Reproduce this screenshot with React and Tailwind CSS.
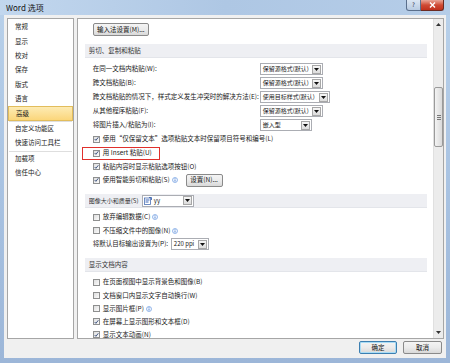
import React from "react";

const F = "font-['Noto_Sans_CJK_SC','Noto_Sans',sans-serif]";

function Check({ checked }) {
  return (
    <span className="w-[7px] h-[7px] border border-[#8e8f8f] bg-gradient-to-br from-[#dedede] to-[#fbfbfb] flex items-center justify-center shrink-0">
      {checked && (
        <svg width="6" height="6" viewBox="0 0 6 6">
          <path d="M0.8 3 L2.3 4.6 L5.2 0.9" stroke="#334a7a" strokeWidth="1.1" fill="none" />
        </svg>
      )}
    </span>
  );
}

function Info() {
  return (
    <svg width="6" height="6" viewBox="0 0 6 6" className="ml-[2px] shrink-0">
      <circle cx="3" cy="3" r="2.5" stroke="#6d9be0" strokeWidth="0.7" fill="#f4f8ff" />
      <rect x="2.6" y="2.5" width="0.8" height="2" fill="#3d74c9" />
      <rect x="2.6" y="1.3" width="0.8" height="0.7" fill="#3d74c9" />
    </svg>
  );
}

function Arrow() {
  return (
    <span className="w-[9px] h-[9px] mr-[1px] border border-[#a7a7a7] bg-gradient-to-b from-[#f6f6f6] to-[#dcdcdc] flex items-center justify-center shrink-0">
      <svg width="5" height="3" viewBox="0 0 5 3">
        <path d="M0 0 H5 L2.5 3 Z" fill="#111" />
      </svg>
    </span>
  );
}

function Drop({ text, cls, icon }) {
  return (
    <div className={"flex items-center h-[12px] border border-[#abadb3] bg-white shrink-0 " + cls}>
      {icon && (
        <svg width="8" height="8" viewBox="0 0 8 8" className="ml-[1px] shrink-0">
          <rect x="0.5" y="1" width="6" height="6.5" fill="#fff" stroke="#4a6fb3" strokeWidth="0.8" />
          <rect x="1.5" y="2.5" width="4" height="1" fill="#3a66b8" />
          <rect x="1.5" y="4.5" width="3" height="1" fill="#3a66b8" />
          <path d="M5 0.5 L7.5 0.5 L7.5 3" stroke="#2b54a6" strokeWidth="0.8" fill="none" />
        </svg>
      )}
      <span className="flex-1 pl-[2px] text-[6px] leading-[10px] text-[#1a1a1a] whitespace-nowrap overflow-hidden">{text}</span>
      <Arrow />
    </div>
  );
}

function Band({ children }) {
  return (
    <div className="ml-[7px] mr-[6px] h-[14px] bg-[#eeeff3] border-b border-[#e3e5ea] flex items-center pl-[4px] text-[6.5px] text-[#333] whitespace-nowrap shrink-0">
      {children}
    </div>
  );
}

function SelRow({ label, children, h }) {
  return (
    <div className={"flex items-center pl-[15px] shrink-0 " + h}>
      <span className="w-[167px] whitespace-nowrap text-[6.5px] text-[#1a1a1a]">{label}</span>
      {children}
    </div>
  );
}

function CheckRow({ checked, label, info, h, children }) {
  return (
    <div className={"flex items-center pl-[15px] shrink-0 " + h}>
      <Check checked={checked} />
      <span className="ml-[3px] whitespace-nowrap text-[6.5px] text-[#1a1a1a]">{label}</span>
      {info && <Info />}
      {children}
    </div>
  );
}

function Btn({ children, def, cls }) {
  return (
    <div
      className={
        "h-[13px] flex items-center justify-center rounded-[2px] border text-[6.5px] text-[#111] bg-gradient-to-b from-[#f4f4f4] via-[#ebebeb] to-[#d9d9d9] " +
        (def ? "border-[#3c7fb1] shadow-[inset_0_0_0_1px_#a9dcf5] " : "border-[#8a8a8a] ") +
        cls
      }
    >
      {children}
    </div>
  );
}

const nav1 = ["常规", "显示", "校对", "保存", "版式", "语言"];

export default function App() {
  return (
    <div className={"w-[450px] h-[363px] overflow-hidden flex flex-col bg-gradient-to-b from-[#b9d1ea] via-[#a9c3e2] to-[#9cb6d8] " + F}>
      {/* title bar */}
      <div className="h-[15px] flex items-start shrink-0 bg-gradient-to-r from-[#c2d7ee] via-[#aec7e4] to-[#b5cde8]">
        <span className="ml-[6px] mt-[3px] text-[8px] leading-[9px] text-[#111]">Word 选项</span>
        <div className="flex-1" />
        <div className="flex mr-[6px]">
          <div className="w-[15px] h-[11px] rounded-bl-[3px] border border-t-0 border-[#5a6f8c] bg-gradient-to-b from-[#dbe6f3] to-[#b8cbe2] flex items-center justify-center text-[6px] leading-none text-[#223]">?</div>
          <div className="w-[23px] h-[11px] rounded-br-[3px] border border-t-0 border-l-0 border-[#6b2a22] bg-gradient-to-b from-[#e8a597] via-[#cf4a34] to-[#c0301c] flex items-center justify-center">
            <svg width="7" height="6" viewBox="0 0 7 6">
              <path d="M1 0.5 L6 5.5 M6 0.5 L1 5.5" stroke="#fff" strokeWidth="1.4" />
            </svg>
          </div>
        </div>
      </div>

      {/* client */}
      <div className="mx-[4px] h-[343px] bg-[#f0f0f0] flex flex-col shrink-0">
        <div className="flex pl-[3px] pr-[2px] pt-[3px] gap-[3px] h-[324px]">
          {/* nav */}
          <div className="w-[67px] h-[321px] bg-white border border-[#a6a6a6] pt-[1px] flex flex-col">
            {nav1.map((t) => (
              <div key={t} className="h-[14.4px] flex items-center pl-[7px] text-[6.5px] text-[#1a1a1a]">{t}</div>
            ))}
            <div className="h-[14.4px] flex items-center pl-[7px] text-[6.5px] text-[#1a1a1a] border border-[#e2bd5c] bg-gradient-to-b from-[#fdebb3] to-[#fbd67a]">高级</div>
            <div className="mx-[1px] border-t border-[#dedede]" />
            <div className="h-[14.4px] flex items-center pl-[7px] text-[6.5px] text-[#1a1a1a]">自定义功能区</div>
            <div className="h-[14.4px] flex items-center pl-[7px] text-[6.5px] text-[#1a1a1a]">快速访问工具栏</div>
            <div className="mx-[1px] border-t border-[#dedede]" />
            <div className="h-[14.4px] flex items-center pl-[7px] text-[6.5px] text-[#1a1a1a]">加载项</div>
            <div className="h-[14.4px] flex items-center pl-[7px] text-[6.5px] text-[#1a1a1a]">信任中心</div>
          </div>

          {/* content */}
          <div className="w-[368px] h-[321px] bg-white border border-[#a6a6a6] flex overflow-hidden">
            <div className="flex-1 flex flex-col overflow-hidden">
              <div className="pl-[15px] pt-[4px] shrink-0">
                <Btn cls="w-[56px]">输入法设置(M)...</Btn>
              </div>
              <div className="h-[8px] shrink-0" />
              <Band>剪切、复制和粘贴</Band>
              <div className="h-[4px] shrink-0" />
              <SelRow h="h-[14px]" label="在同一文档内粘贴(W):">
                <Drop text="保留源格式(默认)" cls="w-[63px]" />
              </SelRow>
              <SelRow h="h-[14px]" label="跨文档粘贴(B):">
                <Drop text="保留源格式(默认)" cls="w-[63px]" />
              </SelRow>
              <SelRow h="h-[14px]" label="跨文档粘贴的情况下，样式定义发生冲突时的解决方法(E):">
                <Drop text="使用目标样式(默认)" cls="w-[70px]" />
              </SelRow>
              <SelRow h="h-[14px]" label="从其他程序粘贴(F):">
                <Drop text="保留源格式(默认)" cls="w-[63px]" />
              </SelRow>
              <SelRow h="h-[14px]" label="将图片插入/粘贴为(I):">
                <Drop text="嵌入型" cls="w-[52px]" />
              </SelRow>
              <CheckRow h="h-[14px]" checked label="使用“仅保留文本”选项粘贴文本时保留项目符号和编号(L)" />
              <div className="h-[14px] flex items-center pl-[4px] shrink-0">
                <div className="w-[78px] h-[13px] border border-[#e0302c] flex items-center pl-[10px]">
                  <Check checked />
                  <span className="ml-[3px] whitespace-nowrap text-[6.5px] text-[#1a1a1a]">用 Insert 粘贴(U)</span>
                </div>
              </div>
              <CheckRow h="h-[13px]" checked label="粘贴内容时显示粘贴选项按钮(O)" />
              <CheckRow h="h-[14px]" checked label="使用智能剪切和粘贴(S)" info>
                <Btn cls="w-[37px] ml-[8px] h-[12px]">设置(N)...</Btn>
              </CheckRow>
              <div className="h-[7px] shrink-0" />
              <Band>
                <span className="w-[53px] shrink-0 text-[6px] overflow-hidden">图像大小和质量(S)</span>
                <Drop text="yy" cls="w-[52px]" icon />
              </Band>
              <div className="h-[2px] shrink-0" />
              <CheckRow h="h-[14px]" label="放弃编辑数据(C)" info />
              <CheckRow h="h-[13px]" label="不压缩文件中的图像(N)" info />
              <div className="h-[14px] flex items-center pl-[15px] shrink-0">
                <span className="w-[78px] whitespace-nowrap text-[6.5px] text-[#1a1a1a]">将默认目标输出设置为(P):</span>
                <Drop text="220 ppi" cls="w-[38px]" />
              </div>
              <div className="h-[7px] shrink-0" />
              <Band>显示文档内容</Band>
              <div className="h-[3px] shrink-0" />
              <CheckRow h="h-[14px]" label="在页面视图中显示背景色和图像(B)" />
              <CheckRow h="h-[13px]" label="文档窗口内显示文字自动换行(W)" />
              <CheckRow h="h-[13px]" label="显示图片框(P)" info />
              <CheckRow h="h-[13px]" checked label="在屏幕上显示图形和文本框(D)" />
              <CheckRow h="h-[13px]" checked label="显示文本动画(N)" />
            </div>
            {/* scrollbar */}
            <div className="w-[10px] h-full bg-[#ececec] border-l border-[#e0e0e0] flex flex-col items-center shrink-0">
              <div className="h-[9px] flex items-center justify-center mt-[1px]">
                <svg width="5" height="3" viewBox="0 0 5 3"><path d="M0 3 H5 L2.5 0 Z" fill="#333" /></svg>
              </div>
              <div className="h-[58px]" />
              <div className="w-[9px] h-[60px] rounded-[2px] border border-[#9a9a9a] bg-gradient-to-r from-[#f3f3f3] to-[#dadada] flex flex-col items-center justify-center gap-[1px]">
                <div className="w-[4px] border-t border-[#777]" />
                <div className="w-[4px] border-t border-[#777]" />
                <div className="w-[4px] border-t border-[#777]" />
              </div>
              <div className="flex-1" />
              <div className="h-[9px] flex items-center justify-center mb-[1px]">
                <svg width="5" height="3" viewBox="0 0 5 3"><path d="M0 0 H5 L2.5 3 Z" fill="#333" /></svg>
              </div>
            </div>
          </div>
        </div>
        {/* bottom buttons */}
        <div className="flex justify-end gap-[6px] pr-[4px] pt-[2px]">
          <Btn def cls="w-[38px]">确定</Btn>
          <Btn cls="w-[39px]">取消</Btn>
        </div>
      </div>
    </div>
  );
}
